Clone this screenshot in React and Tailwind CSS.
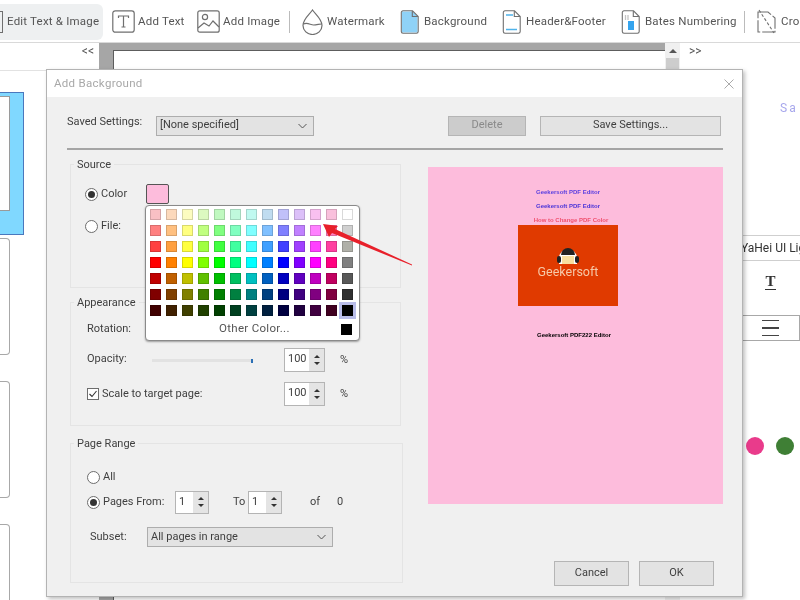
import React from 'react';

const swatches = [
  ['#f9c0c4', '#fcd9bc', '#fcfcc0', '#dcf9c0', '#c0f9c0', '#c0f9dc', '#c0f9f0', '#c0dcf0', '#c0c0f9', '#dcc0f9', '#f9c0f0', '#f9c0dc', '#ffffff'],
  ['#ff8080', '#ffc080', '#ffff80', '#c0ff80', '#80ff80', '#80ffc0', '#80ffff', '#80c0ff', '#8080ff', '#c080ff', '#ff80ff', '#ff80c0', '#d0d0d0'],
  ['#ff4040', '#ffa040', '#ffff40', '#a0ff40', '#40ff40', '#40ffa0', '#40ffff', '#40a0ff', '#4040ff', '#a040ff', '#ff40ff', '#ff40a0', '#b0b0a8'],
  ['#ff0000', '#ff8000', '#ffff00', '#80ff00', '#00ff00', '#00ff80', '#00ffff', '#0080ff', '#0000ff', '#8000ff', '#ff00ff', '#ff0080', '#808080'],
  ['#c00000', '#c06000', '#c0c000', '#60c000', '#00c000', '#00c060', '#00c0c0', '#0060c0', '#0000c0', '#6000c0', '#c000c0', '#c00060', '#585858'],
  ['#800000', '#804000', '#808000', '#408000', '#008000', '#008040', '#008080', '#004080', '#000080', '#400080', '#800080', '#800040', '#303030'],
  ['#400000', '#402000', '#404000', '#204000', '#004000', '#004020', '#004040', '#002040', '#000040', '#200040', '#400040', '#400020', '#000000'],
];

const stroke = '#6f6f6f';

function AddTextIcon() {
  return (
    <svg width="23" height="23" viewBox="0 0 23 23" fill="none" stroke={stroke} strokeWidth="1.2" className="shrink-0">
      <rect x="0.8" y="0.8" width="21.4" height="21.4" rx="2.5" />
      <path d="M6.5 8V6h10v2M11.5 6v11M9.5 17h4" />
    </svg>
  );
}

function AddImageIcon() {
  return (
    <svg width="23" height="23" viewBox="0 0 23 23" fill="none" stroke={stroke} strokeWidth="1.2" className="shrink-0">
      <rect x="0.8" y="0.8" width="21.4" height="21.4" rx="2" />
      <circle cx="8" cy="7" r="2.6" />
      <path d="M1 18l6-5 5 3 4-5 6 6" />
    </svg>
  );
}

function DropIcon() {
  return (
    <svg width="21" height="26" viewBox="0 0 21 26" fill="none" stroke={stroke} strokeWidth="1.2" className="shrink-0">
      <path d="M10.5 1C8 5 1 10 1 16.5a9.5 9 0 0 0 19 0C20 10 13 5 10.5 1z" />
      <path d="M1.5 15c4-2 7 1 10 1s6-1 8-1" />
    </svg>
  );
}

function DocIcon({ kind }) {
  return (
    <svg width="19" height="24" viewBox="0 0 19 24" fill="none" className="shrink-0">
      {kind === 'background' && <path d="M2 1.5h10.5l5 5V22.5H2z" fill="#8fd2f7" />}
      <path d="M3 .8h9.5l5.7 5.7V21.5a1.7 1.7 0 0 1-1.7 1.7H3a1.7 1.7 0 0 1-1.7-1.7V2.5A1.7 1.7 0 0 1 3 .8z" stroke={stroke} strokeWidth="1.1" />
      <path d="M12.3 1v5.5h5.7" stroke={stroke} strokeWidth="1.1" />
      {kind === 'header' && <path d="M4 5h7M4 19.5h11" stroke="#4fb3ea" strokeWidth="1.6" />}
      {kind === 'bates' && (
        <>
          <path d="M4.5 5v5M7 5v5" stroke="#c4c4c4" strokeWidth="1.3" />
          <rect x="7" y="11" width="6" height="9" fill="#35a4ee" />
        </>
      )}
    </svg>
  );
}

function CropIcon() {
  return (
    <svg width="19" height="25" viewBox="0 0 19 25" fill="none" stroke={stroke} strokeWidth="1.1" className="shrink-0">
      <path d="M1 3h10l7 6v14H1z" strokeDasharray="14 2" />
      <path d="M2 1l15 23" strokeDasharray="3 2" />
    </svg>
  );
}

function Radio({ checked }) {
  return (
    <span className="flex h-[13px] w-[13px] shrink-0 items-center justify-center rounded-full border border-[#6d6d6d] bg-white">
      {checked && <span className="h-[7px] w-[7px] rounded-full bg-[#333333]" />}
    </span>
  );
}

function Spinner({ value, width = 'w-[41px]', height = 'h-[24px]' }) {
  return (
    <div className={`flex shrink-0 border border-[#b4b4b4] bg-[#e4e4e4] ${width} ${height}`}>
      <div className="flex-1 bg-white pl-[3px] text-[11px] leading-[19px]">{value}</div>
      <div className="flex w-[15px] flex-col items-center justify-center gap-[4px] text-[#333333]">
        <span className="h-0 w-0 border-x-[3px] border-b-[3px] border-x-transparent border-b-[#333333]" />
        <span className="h-0 w-0 border-x-[3px] border-t-[3px] border-x-transparent border-t-[#333333]" />
      </div>
    </div>
  );
}

function Select({ label, width }) {
  return (
    <div className={`flex h-[20px] shrink-0 items-center justify-between border border-[#adadad] bg-[#e3e3e3] pl-[3px] pr-[6px] text-[11px] ${width}`}>
      <span>{label}</span>
      <svg width="9" height="6" viewBox="0 0 9 6" fill="none" stroke="#555555" strokeWidth="1">
        <path d="M.5 1l4 4 4-4" />
      </svg>
    </div>
  );
}

function Toolbar() {
  return (
    <div className="flex h-[43px] shrink-0 items-center overflow-hidden whitespace-nowrap border-b border-[#d9d9d9] bg-white pt-px text-[11.5px] tracking-[0.2px] text-[#555555]">
      <div className="relative flex h-[36px] w-[103px] shrink-0 items-center rounded-r-md bg-[#eef0f1] pl-[7px]">
        <span className="absolute left-0 top-[7px] h-[22px] w-[3px] border-y border-r border-[#6f6f6f]" />
        Edit Text &amp; Image
      </div>
      <div className="ml-[9px] flex w-[72px] shrink-0 items-center gap-[3px]"><AddTextIcon />Add Text</div>
      <div className="ml-[13px] flex w-[83px] shrink-0 items-center gap-[3px]"><AddImageIcon />Add Image</div>
      <span className="ml-[9px] h-[22px] w-px shrink-0 bg-[#bbbbbb]" />
      <div className="ml-[12px] flex w-[82px] shrink-0 items-center gap-[4px]"><DropIcon />Watermark</div>
      <div className="ml-[16px] flex w-[86px] shrink-0 items-center gap-[5px]"><DocIcon kind="background" />Background</div>
      <div className="ml-[16px] flex w-[103px] shrink-0 items-center gap-[5px]"><DocIcon kind="header" />Header&amp;Footer</div>
      <div className="ml-[16px] flex w-[113px] shrink-0 items-center gap-[5px]"><DocIcon kind="bates" />Bates Numbering</div>
      <span className="ml-[10px] h-[22px] w-px shrink-0 bg-[#bbbbbb]" />
      <div className="ml-[12px] flex shrink-0 items-center gap-[5px]"><CropIcon />Crop</div>
    </div>
  );
}

function Sidebar() {
  return (
    <div className="w-[99px] shrink-0 bg-white">
      <div className="flex h-[28px] justify-end border-b border-[#e2e2e2] pr-[5px] pt-px text-[12px] leading-[14px] text-[#555555]">&lt;&lt;</div>
      <div className="flex flex-col pt-[21px]">
        <div className="flex h-[143px] w-[24px] items-start border-y border-r border-[#4a78bd] bg-[#80d8ff] pt-[3px]">
          <div className="h-[115px] w-[10px] border-y border-r border-[#9a9a9a] bg-white" />
        </div>
        <div className="mt-[3px] h-[117px] w-[10px] rounded-r-sm border-y border-r border-[#a8a8a8]" />
        <div className="mt-[26px] h-[117px] w-[10px] rounded-r-sm border-y border-r border-[#a8a8a8]" />
        <div className="mt-[26px] h-[117px] w-[10px] rounded-r-sm border-y border-r border-[#a8a8a8]" />
      </div>
    </div>
  );
}

function Center() {
  return (
    <div className="flex flex-1">
      <div className="flex-1 bg-[#a6a6a6] pl-[14px] pt-[7px]">
        <div className="h-full border-l border-t border-[#5d5d5d] bg-white" />
      </div>
      <div className="flex w-[15px] shrink-0 flex-col items-center bg-[#f0f0f0] pt-[6px]">
        <span className="h-0 w-0 border-x-[4px] border-b-[4px] border-x-transparent border-b-[#555555]" />
        <span className="mt-[5px] h-[30px] w-[13px] bg-[#cdcdcd]" />
      </div>
    </div>
  );
}

function RightPanel() {
  return (
    <div className="w-[120px] shrink-0 overflow-hidden bg-white text-[#333333]">
      <div className="h-[28px] pl-[9px] pt-px text-[12px] leading-[14px] text-[#555555]">&gt;&gt;</div>
      <div className="mt-[31px] pl-[100px] text-[12px] leading-[12px] tracking-[2px] text-[#a7a7ec]">Sa</div>
      <div className="ml-[61px] mt-[121px] h-[26px] whitespace-nowrap border-y border-[#cfcfcf] text-[12px] leading-[24px]">YaHei UI Light</div>
      <div className="ml-[61px] mt-[13px] flex w-[59px] justify-center">
        <span className="border-b-[1.5px] border-[#333333] font-['Liberation_Serif',serif] text-[15px] font-bold leading-[15px]">T</span>
      </div>
      <div className="ml-[61px] mt-[25px] flex h-[26px] w-[59px] flex-col items-center justify-center gap-[6px] border border-[#a8a8a8]">
        <span className="h-[1.5px] w-[17px] bg-[#444444]" />
        <span className="h-[1.5px] w-[17px] bg-[#444444]" />
        <span className="h-[1.5px] w-[17px] bg-[#444444]" />
      </div>
      <div className="ml-[66px] mt-[96px] flex gap-[12px]">
        <span className="h-[18px] w-[18px] rounded-full bg-[#e93b8b]" />
        <span className="h-[18px] w-[18px] rounded-full bg-[#3f7f35]" />
      </div>
    </div>
  );
}

function ColorPopup() {
  return (
    <div className="absolute left-[98px] top-[135px] h-[136px] w-[215px] rounded-sm border border-[#8a8a8a] bg-white pl-[4px] pt-[3px] shadow-[0_1px_2px_rgba(0,0,0,0.35)]">
      <div className="grid grid-cols-[repeat(13,11px)] gap-[5px]">
        {swatches.flat().map((color, i) => (
          <span
            key={i}
            className={`h-[11px] w-[11px] border border-black/15 ${i === 90 ? 'shadow-[0_0_0_3px_#b9bde9]' : ''}`}
            style={{ backgroundColor: color }}
          />
        ))}
      </div>
      <div className="mt-[5px] flex h-[16px] items-center justify-between pr-[7px]">
        <span className="pl-[69px] text-[11.5px] tracking-[0.3px] text-[#555555]">Other Color...</span>
        <span className="h-[11px] w-[11px] bg-black" />
      </div>
    </div>
  );
}

function Source() {
  return (
    <fieldset className="h-[132px] border border-[#e4e4e4] px-[14px]">
      <legend className="relative top-px -ml-[11px] px-[3px] text-[11px] leading-[16px]">Source</legend>
      <div className="mt-[12px] flex h-[20px] items-center">
        <Radio checked />
        <span className="ml-[3px] w-[45px]">Color</span>
        <span className="h-[20px] w-[23px] rounded-[2px] border border-[#555555] bg-[#fdbcdc]" />
      </div>
      <div className="mt-[12px] flex h-[20px] items-center">
        <Radio />
        <span className="ml-[3px]">File:</span>
      </div>
    </fieldset>
  );
}

function Appearance() {
  return (
    <fieldset className="mt-[6px] h-[132px] border border-[#e4e4e4] pl-[16px]">
      <legend className="relative top-px -ml-[13px] px-[3px] text-[11px] leading-[16px]">Appearance</legend>
      <div className="mt-[6px] flex items-center">
        <span className="w-[197px] pt-[2px]">Rotation:</span>
        <Spinner value="" />
      </div>
      <div className="mt-[8px] flex items-center">
        <span className="w-[65px] pb-[2px]">Opacity:</span>
        <span className="relative h-[3px] w-[101px] bg-[#e2e2e2]">
          <span className="absolute right-0 top-0 h-[4px] w-[2px] bg-[#2a6fb5]" />
        </span>
        <span className="w-[31px]" />
        <Spinner value="100" />
        <span className="ml-[15px]">%</span>
      </div>
      <div className="mt-[10px] flex items-center">
        <span className="flex w-[197px] items-center">
          <span className="flex h-[12px] w-[12px] items-center justify-center border border-[#6d6d6d] bg-white">
            <svg width="10" height="10" viewBox="0 0 10 10" fill="none" stroke="#333333" strokeWidth="1.1">
              <path d="M1.5 5l2.5 2.5L8.5 2" />
            </svg>
          </span>
          <span className="ml-[3px]">Scale to target page:</span>
        </span>
        <Spinner value="100" />
        <span className="ml-[15px]">%</span>
      </div>
    </fieldset>
  );
}

function PageRange() {
  return (
    <fieldset className="mt-[9px] h-[148px] w-[333px] border border-[#e4e4e4] pl-[16px]">
      <legend className="relative top-px -ml-[13px] px-[3px] text-[11px] leading-[16px]">Page Range</legend>
      <div className="mt-[18px] flex h-[16px] items-center">
        <Radio />
        <span className="ml-[3px]">All</span>
      </div>
      <div className="mt-[5px] flex h-[24px] items-center">
        <Radio checked />
        <span className="ml-[3px] w-[72px]">Pages From:</span>
        <Spinner value="1" width="w-[34px]" height="h-[23px]" />
        <span className="ml-[24px] w-[15px]">To</span>
        <Spinner value="1" width="w-[34px]" height="h-[23px]" />
        <span className="ml-[28px] w-[27px]">of</span>
        <span>0</span>
      </div>
      <div className="mt-[13px] flex items-center pl-[3px]">
        <span className="w-[57px]">Subset:</span>
        <Select label="All pages in range" width="w-[186px]" />
      </div>
    </fieldset>
  );
}

function Preview() {
  return (
    <div className="flex h-[337px] w-[295px] flex-col items-center bg-[#fdbcdc] pr-[15px] pt-[21px] font-['Liberation_Sans',sans-serif] text-[6px] font-bold leading-[8px] blur-[0.4px]">
      <div className="text-[#5a3fe0]">Geekersoft PDF Editor</div>
      <div className="mt-[6px] text-[#4b35d8]">Geekersoft PDF Editor</div>
      <div className="ml-[6px] mt-[6px] text-[#f0506e]">How to Change PDF Color</div>
      <div className="mt-[1px] flex h-[81px] w-[100px] flex-col items-center bg-[#e03a00] pt-[20px]">
        <svg width="24" height="20" viewBox="0 0 24 20">
          <path d="M3 19v-6a9 9 0 0 1 18 0v6z" fill="#ffffff" />
          <path d="M5 10a7 7 0 0 1 14 0z" fill="#222222" />
          <rect x="6" y="11" width="12" height="8" fill="#f7dfa0" />
          <rect x="1" y="11" width="4" height="7" rx="2" fill="#222222" />
          <rect x="19" y="11" width="4" height="7" rx="2" fill="#222222" />
        </svg>
        <span className="-mt-px font-['Roboto',sans-serif] text-[12.5px] font-normal leading-[15px] text-[#f6c9a8]">Geekersoft</span>
      </div>
      <div className="ml-[12px] mt-[25px] text-black">Geekersoft PDF222 Editor</div>
    </div>
  );
}

function Dialog() {
  return (
    <div className="absolute left-[46px] top-[69px] flex h-[528px] w-[697px] flex-col border border-[#b3b3b3] bg-[#f0f0f0] text-[11px] text-[#3f3f3f] shadow-[2px_2px_4px_rgba(0,0,0,0.25)]">
      <div className="flex h-[27px] shrink-0 items-center justify-between bg-white pl-[7px] pr-[8px] text-[11.5px] tracking-[0.3px] text-[#a8a8a8]">
        <span>Add Background</span>
        <svg width="10" height="10" viewBox="0 0 10 10" stroke="#aaaaaa" strokeWidth="1">
          <path d="M.5.5l9 9M9.5.5l-9 9" />
        </svg>
      </div>
      <div className="flex-1 pl-[20px] pr-[19px]">
        <div className="flex h-[53px] items-center border-b-2 border-[#a5a5a5] pt-[6px]">
          <span className="-mt-[7px] w-[89px]">Saved Settings:</span>
          <Select label="[None specified]" width="w-[158px]" />
          <div className="ml-[134px] flex h-[20px] w-[78px] items-center justify-center border border-[#b5b5b5] bg-[#cccccc] text-[#8a8a8a]">Delete</div>
          <div className="ml-[14px] flex h-[20px] w-[181px] items-center justify-center border border-[#b5b5b5] bg-[#e3e3e3]">Save Settings...</div>
        </div>
        <div className="mt-[6px] flex">
          <div className="ml-[3px] flex w-[331px] shrink-0 flex-col">
            <Source />
            <Appearance />
            <PageRange />
          </div>
          <div className="ml-[27px] flex flex-col pt-[11px]">
            <Preview />
            <div className="mt-[57px] flex justify-end gap-[10px] pr-[9px]">
              <div className="flex h-[25px] w-[75px] items-center justify-center border border-[#b5b5b5] bg-[#e3e3e3]">Cancel</div>
              <div className="flex h-[25px] w-[75px] items-center justify-center border border-[#b5b5b5] bg-[#e3e3e3]">OK</div>
            </div>
          </div>
        </div>
      </div>
      <ColorPopup />
    </div>
  );
}

export default function App() {
  return (
    <div className="relative flex h-[600px] w-[800px] flex-col overflow-hidden bg-white font-['Roboto',sans-serif] blur-[0.3px]">
      <Toolbar />
      <div className="flex flex-1">
        <Sidebar />
        <Center />
        <RightPanel />
      </div>
      <Dialog />
      {/* red arrow pointing at the picked swatch */}
      <svg className="absolute left-[318px] top-[218px]" width="100" height="52" viewBox="0 0 100 52">
        <path d="M5 6L20 8 17 11 94 46.5 94 47.5 14 15 11 19z" fill="#e8202a" />
      </svg>
    </div>
  );
}
